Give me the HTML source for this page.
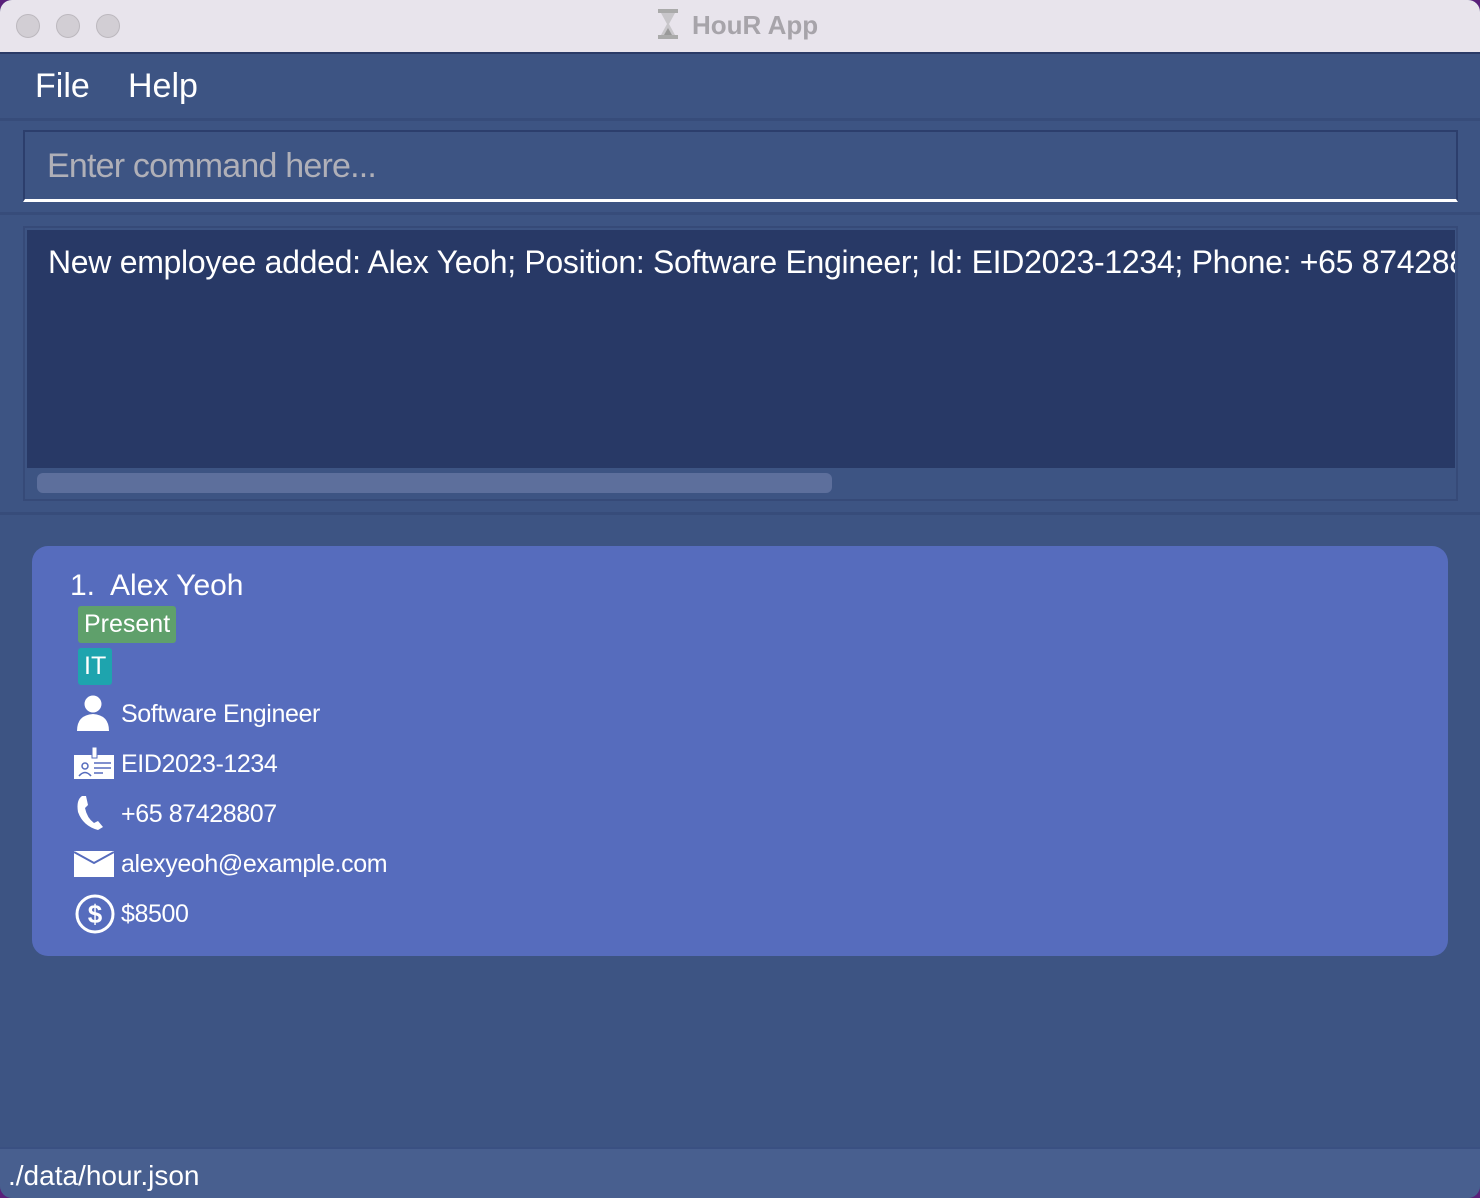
<!DOCTYPE html>
<html><head><meta charset="utf-8"><style>
*{margin:0;padding:0;box-sizing:border-box}
body{width:1480px;height:1198px;background:#5a1f7a;font-family:"Liberation Sans",sans-serif;overflow:hidden;position:relative}
.win{position:absolute;left:0;top:0;width:1480px;height:1198px;border-radius:12px;overflow:hidden;background:#3d5483}
.title{position:absolute;left:0;top:0;width:1480px;height:54px;background:#e8e4ec;border-bottom:2px solid #2a3a66}
.dot{position:absolute;top:14px;width:24px;height:24px;border-radius:50%;background:#d2ced4;border:1px solid #bcb8be}
.ttl{position:absolute;left:692px;top:10px;font-size:26px;font-weight:bold;color:#a7a4aa}
.menu{position:absolute;top:67px;font-size:34px;color:#fff}
.sep{position:absolute;left:0;width:1480px;height:3px;background:#374c7a}
.cmd{position:absolute;left:23px;top:130px;width:1435px;height:72px;border:2px solid #2c3e6c;border-bottom:3px solid #fff;background:#3d5483}
.cmd span{position:absolute;left:22px;top:15px;font-size:34px;color:#b0b0b8;letter-spacing:-0.8px}
.res{position:absolute;left:23px;top:226px;width:1435px;height:275px;border:2px solid #364a78}
.resin{position:absolute;left:2px;top:2px;width:1428px;height:238px;background:#283966;overflow:hidden}
.resin span{position:absolute;left:21px;top:14px;font-size:32px;color:#fff;white-space:nowrap;letter-spacing:-0.3px}
.scroll{position:absolute;left:12px;top:245px;width:795px;height:20px;border-radius:6px;background:#5d6f9c}
.card{position:absolute;left:32px;top:546px;width:1416px;height:410px;border-radius:16px;background:#566cbd;color:#fff}
.name{position:absolute;left:38px;top:23px;font-size:30px}
.tag{position:absolute;left:46px;font-size:25px;padding:4px 6px;border-radius:3px}
.f{position:absolute;left:89px;font-size:25px;letter-spacing:-0.4px}
.ic{position:absolute;left:42px}
.status{position:absolute;left:0;top:1147px;width:1480px;height:51px;background:#485f8f;border-top:2px solid #3a5082}
.status span{position:absolute;left:8px;top:11px;font-size:28px;color:#fff}
</style></head><body><div class="win">
<div class="title">
<div class="dot" style="left:16px"></div><div class="dot" style="left:56px"></div><div class="dot" style="left:96px"></div>
<svg style="position:absolute;left:656px;top:8px" width="24" height="32" viewBox="0 0 24 32"><rect x="2" y="1" width="20" height="4" fill="#aaa"/><rect x="2" y="27" width="20" height="4" fill="#aaa"/><path d="M5 5 L19 5 L13 16 L19 27 L5 27 L11 16Z" fill="#c8c6ca"/><path d="M8 27 L12 20 L16 27Z" fill="#999"/></svg>
<div class="ttl">HouR App</div></div>
<div class="menu" style="left:35px">File</div><div class="menu" style="left:128px">Help</div>
<div class="sep" style="top:118px"></div>
<div class="cmd"><span>Enter command here...</span></div>
<div class="sep" style="top:212px"></div>
<div class="res"><div class="resin"><span>New employee added: Alex Yeoh; Position: Software Engineer; Id: EID2023-1234; Phone: +65 87428807; Email: alexyeoh@example.com</span></div><div class="scroll"></div></div>
<div class="sep" style="top:512px"></div>
<div class="card">
<div class="name">1.&nbsp; Alex Yeoh</div>
<div class="tag" style="top:60px;background:#5fa06b">Present</div>
<div class="tag" style="top:102px;background:#1ea4ae">IT</div>
<svg class="ic" style="top:148px" width="36" height="38" viewBox="0 0 36 38"><circle cx="19" cy="10" r="8.5" fill="#fff"/><path d="M3 37 Q3 21 19 20 Q35 21 35 37Z" fill="#fff"/></svg>
<div class="f" style="top:154px">Software Engineer</div>
<svg class="ic" style="top:200px" width="42" height="34" viewBox="0 0 42 34"><rect x="0" y="9" width="40" height="24" fill="#fff"/><rect x="18" y="1" width="5" height="11" fill="#fff" stroke="#566cbd" stroke-width="1"/><circle cx="11" cy="20" r="3" fill="none" stroke="#566cbd" stroke-width="1.5"/><path d="M5 30 Q11 23 17 30" fill="none" stroke="#566cbd" stroke-width="1.5"/><path d="M20 17H37M20 22H37M20 27H29" stroke="#566cbd" stroke-width="1.5"/></svg>
<div class="f" style="top:204px">EID2023-1234</div>
<svg class="ic" style="top:248px" width="34" height="38" viewBox="0 0 34 38"><path d="M8 2 Q2 6 4 18 Q9 32 24 36 L29 33 L24 27 L20 29 Q13 24 11 14 L14 11 L12 2Z" fill="#fff"/></svg>
<div class="f" style="top:254px">+65 87428807</div>
<svg class="ic" style="top:305px" width="40" height="26" viewBox="0 0 40 26"><rect x="0" y="0" width="40" height="26" fill="#fff"/><path d="M0 1 L20 12 L40 1" fill="none" stroke="#566cbd" stroke-width="2"/></svg>
<div class="f" style="top:304px">alexyeoh@example.com</div>
<svg class="ic" style="top:347px" width="42" height="42" viewBox="0 0 42 42"><circle cx="21" cy="21" r="18" fill="none" stroke="#fff" stroke-width="3"/><text x="21" y="30" text-anchor="middle" font-size="26" font-weight="bold" fill="#fff" font-family="Liberation Sans">$</text></svg>
<div class="f" style="top:354px">$8500</div>
</div>
<div class="status"><span>./data/hour.json</span></div>
</div></body></html>
